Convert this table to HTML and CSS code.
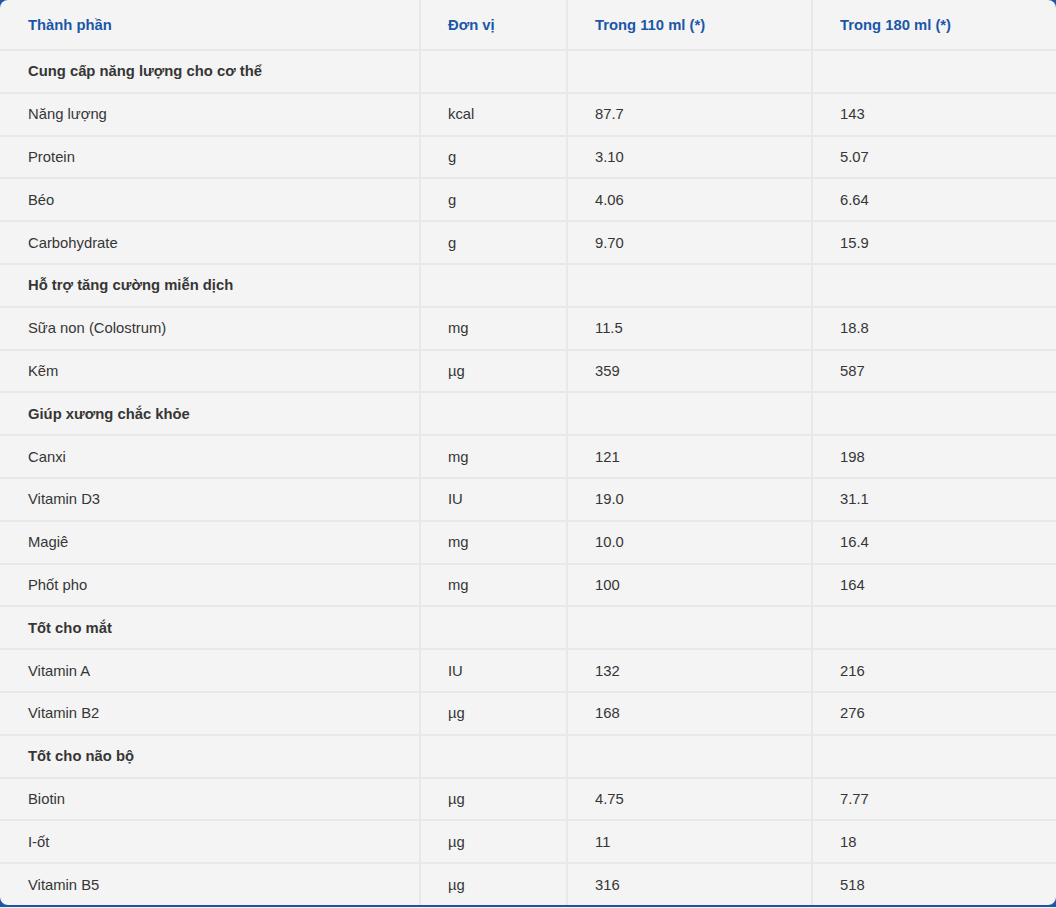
FILE: index.html
```html
<!DOCTYPE html>
<html lang="vi">
<head>
<meta charset="utf-8">
<link rel="stylesheet" href="styles.css">
</head>
<body>
<div class="card">
  <div class="inner">
    <table class="nutri">
      <colgroup>
        <col class="c1"><col class="c2"><col class="c3"><col class="c4">
      </colgroup>
      <thead>
        <tr><th>Thành phần</th><th>Đơn vị</th><th>Trong 110 ml (*)</th><th>Trong 180 ml (*)</th></tr>
      </thead>
      <tbody>
        <tr class="grp"><td>Cung cấp năng lượng cho cơ thể</td><td></td><td></td><td></td></tr>
        <tr><td>Năng lượng</td><td>kcal</td><td>87.7</td><td>143</td></tr>
        <tr><td>Protein</td><td>g</td><td>3.10</td><td>5.07</td></tr>
        <tr><td>Béo</td><td>g</td><td>4.06</td><td>6.64</td></tr>
        <tr><td>Carbohydrate</td><td>g</td><td>9.70</td><td>15.9</td></tr>
        <tr class="grp"><td>Hỗ trợ tăng cường miễn dịch</td><td></td><td></td><td></td></tr>
        <tr><td>Sữa non (Colostrum)</td><td>mg</td><td>11.5</td><td>18.8</td></tr>
        <tr><td>Kẽm</td><td>µg</td><td>359</td><td>587</td></tr>
        <tr class="grp"><td>Giúp xương chắc khỏe</td><td></td><td></td><td></td></tr>
        <tr><td>Canxi</td><td>mg</td><td>121</td><td>198</td></tr>
        <tr><td>Vitamin D3</td><td>IU</td><td>19.0</td><td>31.1</td></tr>
        <tr><td>Magiê</td><td>mg</td><td>10.0</td><td>16.4</td></tr>
        <tr><td>Phốt pho</td><td>mg</td><td>100</td><td>164</td></tr>
        <tr class="grp"><td>Tốt cho mắt</td><td></td><td></td><td></td></tr>
        <tr><td>Vitamin A</td><td>IU</td><td>132</td><td>216</td></tr>
        <tr><td>Vitamin B2</td><td>µg</td><td>168</td><td>276</td></tr>
        <tr class="grp"><td>Tốt cho não bộ</td><td></td><td></td><td></td></tr>
        <tr><td>Biotin</td><td>µg</td><td>4.75</td><td>7.77</td></tr>
        <tr><td>I-ốt</td><td>µg</td><td>11</td><td>18</td></tr>
        <tr><td>Vitamin B5</td><td>µg</td><td>316</td><td>518</td></tr>
      </tbody>
    </table>
  </div>
</div>
</body>
</html>
```
FILE: styles.css
```css
html, body {
  margin: 0;
  padding: 0;
  background: #f4f4f4;
}
.card {
  background: #1d55a4;
  padding-bottom: 2px;
  width: 1056px;
}
.inner {
  background: #f4f4f4;
  border-radius: 8px;
  overflow: hidden;
}
.nutri {
  width: 1056px;
  table-layout: fixed;
  border-collapse: collapse;
  font-family: "Liberation Sans", Arial, sans-serif;
  font-size: 14.8px;
  color: #363636;
}
.c1 { width: 420px; }
.c2 { width: 147px; }
.c3 { width: 245px; }
.c4 { width: 244px; }
.nutri th, .nutri td {
  border: 2px solid #e8e8e8;
  padding: 0 0 0 27px;
  text-align: left;
  vertical-align: middle;
}
.nutri tr > :first-child { border-left: none; padding-left: 28px; }
.nutri tr > :last-child { border-right: none; }
.nutri thead th {
  border-top: none;
  height: 49px;
  color: #1b57a8;
  font-weight: bold;
}
.nutri tbody td { height: 40.8px; }
.nutri tbody tr:last-child td { border-bottom: none; }
.nutri .grp td:first-child { font-weight: bold; }
```
